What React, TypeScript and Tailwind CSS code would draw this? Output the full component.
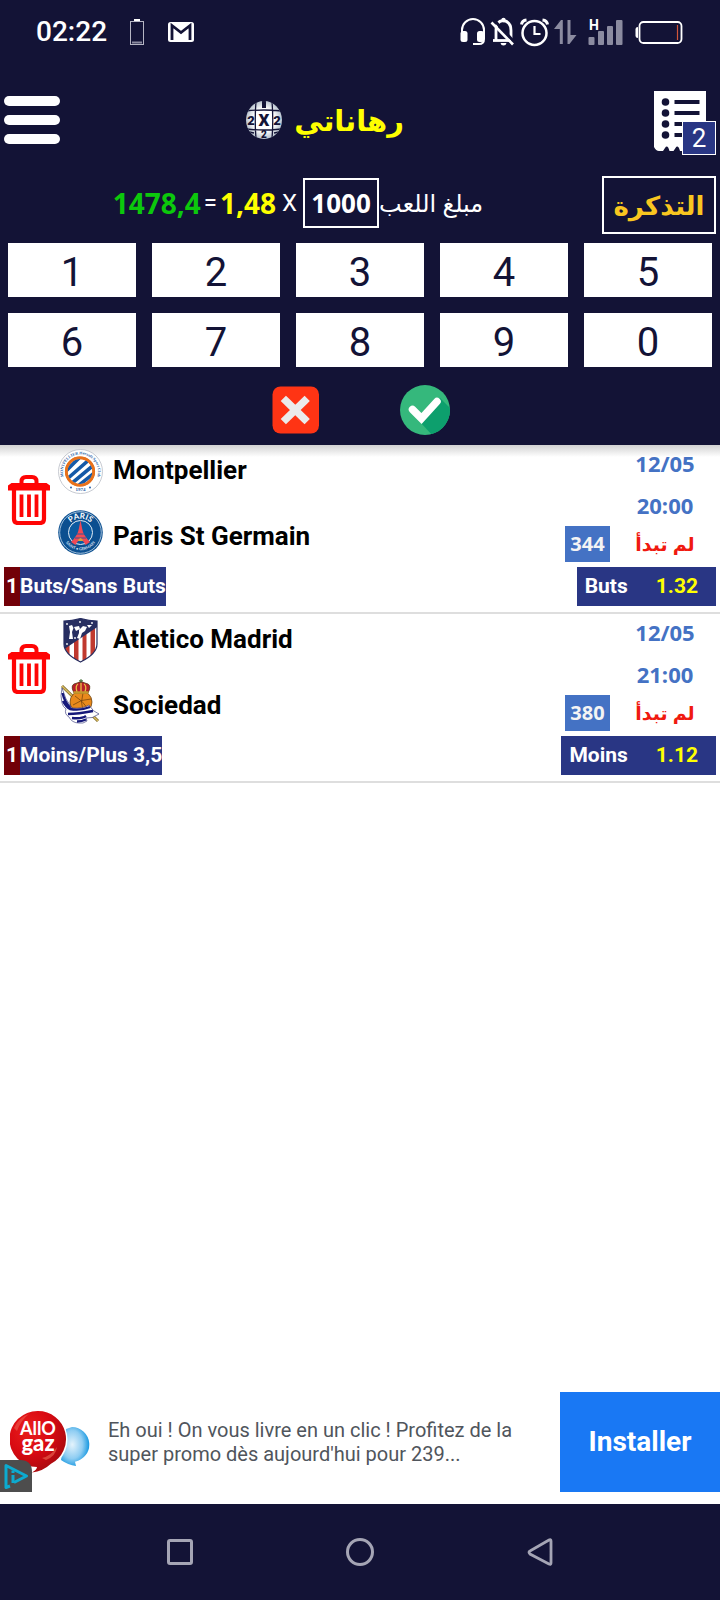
import { useState } from 'react';
import { clsx } from 'clsx';

type Match = {
  id: number;
  home: string;
  away: string;
  homeLogo: () => React.ReactElement;
  awayLogo: () => React.ReactElement;
  date: string;
  time: string;
  code: string;
  market: string;
  pick: string;
  odd: string;
};

function StatusIcons() {
  return (
    <svg viewBox="0 0 226 32" className="w-[226px] h-8" fill="none">
      {/* headset */}
      <path d="M3 21v-7a11 11 0 0 1 22 0v9q0 5-5 5h-6" stroke="#fff" strokeWidth="2" />
      <rect x="1.500" y="15" width="7" height="11" rx="2.500" fill="#fff" />
      <rect x="18" y="15" width="7" height="11" rx="2.500" fill="#fff" />
      {/* muted bell */}
      <path d="M37 24V14q0-8.500 7-9.500 8 1 8 10v10" stroke="#fff" strokeWidth="2.800" />
      <path d="M34 24.500h18" stroke="#fff" strokeWidth="2.800" />
      <circle cx="44.500" cy="4" r="2.200" fill="#fff" />
      <path d="M41.500 27h6q-.5 2.500-3 2.500t-3-2.500" fill="#fff" />
      <path d="M35 4l22 24" stroke="#131336" strokeWidth="3" />
      <path d="M32.500 6.500l21.500 22" stroke="#fff" strokeWidth="2.600" />
      {/* alarm */}
      <circle cx="75.500" cy="17" r="12" stroke="#fff" strokeWidth="2.500" />
      <path d="M75.500 10v8h6" stroke="#fff" strokeWidth="2.200" />
      <path d="M62.500 8.500q.5-4 5-4.500M88.500 8.500q-.5-4-5-4.500" stroke="#fff" strokeWidth="3" />
      {/* mobile data arrows */}
      <path d="M95 13l7-9h1.800v24h-3V13zM108.500 4h3v15h6l-7 9h-2z" fill="#8b8ba0" />
      {/* signal */}
      <text x="130" y="14" fontSize="14" fontWeight="700" fill="#fff" fontFamily="Roboto, sans-serif">H</text>
      <rect x="129.500" y="21" width="6" height="8" rx="1" fill="#8b8ba0" />
      <rect x="139" y="15" width="6" height="14" rx="1" fill="#8b8ba0" />
      <rect x="148" y="10" width="6" height="19" rx="1" fill="#8b8ba0" />
      <rect x="157" y="4" width="6.500" height="25" rx="1" fill="#8b8ba0" />
      {/* battery */}
      <rect x="180.500" y="6" width="42" height="21" rx="4" stroke="#fff" strokeWidth="1.800" />
      <path d="M179 11q-2.500 0-2.500 2v7q0 2 2.500 2z" fill="#fff" />
      <path d="M218.500 9v15" stroke="#d2553a" strokeWidth="1.200" />
    </svg>
  );
}

function MenuIcon() {
  return (
    <svg viewBox="0 0 56 48" className="w-14 h-12" fill="#fff">
      <rect width="56" height="10" rx="5" />
      <rect y="19" width="56" height="10" rx="5" />
      <rect y="38" width="56" height="10" rx="5" />
    </svg>
  );
}

function BallLogo() {
  return (
    <svg viewBox="0 0 36 38" className="w-9 h-[38px]">
      <defs>
        <radialGradient id="ball">
          <stop offset="0.600" stopColor="#fff" />
          <stop offset="1" stopColor="#b9c3cf" />
        </radialGradient>
        <clipPath id="ballClip"><ellipse cx="18" cy="19" rx="18" ry="19" /></clipPath>
      </defs>
      <g clipPath="url(#ballClip)">
        <rect width="36" height="38" fill="url(#ball)" />
        <path d="M10 0q-1.500 19 0 38M26 0q1.500 19 0 38M0 10q18-2 36 0M0 28q18 2 36 0" stroke="#131336" strokeWidth="1.300" fill="none" />
        <path d="M16 0h4v7h-4z" fill="#131336" />
        <path d="M2 9q2-5 6-7M34 9q-2-5-6-7M3 31l5 1M33 31l-5 1" stroke="#131336" strokeWidth="1.500" />
        <g fill="#131336" fontFamily="Roboto, sans-serif" fontWeight="900" textAnchor="middle">
          <text x="18" y="25" fontSize="17">X</text>
          <text x="5" y="24" fontSize="13">2</text>
          <text x="31" y="24" fontSize="13">2</text>
          <text x="18" y="37" fontSize="10">2</text>
        </g>
      </g>
    </svg>
  );
}

function TicketIcon() {
  return (
    <svg viewBox="0 0 52 62" className="w-[52px] h-[62px]">
      <path d="M0 0h52v58l-4 2-4-4-4 4-5 0q-2-6-4 0h-5q-2-7-4.500-3l-2 3h-4q-2-7-4.500-3l-2 3H5q-3 0-5-4z" fill="#fff" />
      <g fill="#131336">
        {[11, 22, 33, 44].map(y => (
          <g key={y}>
            <circle cx="11.500" cy={y} r="3.800" />
            <rect x="20.500" y={y - 2} width="25" height="4" />
          </g>
        ))}
      </g>
    </svg>
  );
}

function TrashIcon() {
  return (
    <svg viewBox="0 0 42 50" className="w-[42px] h-[50px]" fill="none" stroke="#ff0505">
      <path d="M13.500 9V6.500q0-4.500 4.500-4.500h6q4.500 0 4.500 4.500V9" strokeWidth="4" />
      <path d="M0 13.500v-3L3.500 8h35l3.500 2.500v5H0z" fill="#ff0505" stroke="none" />
      <path d="M6 15v29q0 4 4 4h22q4 0 4-4V15" strokeWidth="4.200" />
      <path d="M13.500 19.500V42M21 19.500V42M28.500 19.500V42" strokeWidth="3.800" />
    </svg>
  );
}

function MontpellierLogo() {
  return (
    <svg viewBox="0 0 45 45" className="size-[45px]">
      <defs>
        <clipPath id="mtp"><circle cx="22" cy="22.500" r="12.500" /></clipPath>
        <path id="mtpArc" d="M9 34A17.500 17.500 0 1 1 36 34" />
      </defs>
      <circle cx="22.500" cy="22.500" r="22" fill="#fff" stroke="#b9bdc5" strokeWidth="0.800" />
      <circle cx="22" cy="22.500" r="13.700" fill="#fff" stroke="#e8711c" strokeWidth="2.800" />
      <g clipPath="url(#mtp)" stroke="#1559a7" strokeWidth="3.600">
        <path d="M5 25L25 5M8 31L32 10M13 35L37 15M20 37L40 21" />
      </g>
      <circle cx="22" cy="22.500" r="13.700" fill="none" stroke="#e8711c" strokeWidth="2.600" />
      <text fill="#2a62a8" fontSize="4" fontWeight="700" fontFamily="Liberation Serif, serif" textAnchor="middle">
        <textPath href="#mtpArc" startOffset="50%">MONTPELLIER Hérault Sport Club</textPath>
      </text>
      <text x="22.500" y="42" fontSize="5" fontWeight="700" textAnchor="middle" fill="#2a62a8" fontFamily="Liberation Serif, serif">1974</text>
      <circle cx="13" cy="38.500" r="1" fill="#2a62a8" />
      <circle cx="32" cy="38.500" r="1" fill="#2a62a8" />
    </svg>
  );
}

function ParisLogo() {
  return (
    <svg viewBox="0 0 45 45" className="size-[45px]">
      <defs>
        <path id="psgTop" d="M9 19A14 14 0 0 1 36 19" />
        <path id="psgBottom" d="M6.500 30.500A18 18 0 0 0 38.500 30.500" />
      </defs>
      <circle cx="22.500" cy="22.500" r="22.300" fill="#0b4f90" />
      <circle cx="22.500" cy="22.500" r="20.800" fill="none" stroke="#c9dcec" strokeWidth="0.800" />
      <circle cx="22.500" cy="22.500" r="12" fill="#0a5aa0" stroke="#e4edf5" strokeWidth="1" />
      <path d="M22.500 10l1.500 8q1 7 8 14l-4.500 3q-2-4.500-5-5-3 .5-5 5l-4.500-3q7-7 8-14z" fill="#f04a56" />
      <path d="M18 24h9M17 28h11" stroke="#0a5aa0" strokeWidth="0.800" />
      <path d="M20 31q0-2 2.500-3 2.500 1 2.500 3z" fill="#d9a33b" />
      <text fill="#fff" fontSize="8" fontWeight="700" fontFamily="Lato, sans-serif" textAnchor="middle">
        <textPath href="#psgTop" startOffset="50%">PARIS</textPath>
      </text>
      <text fill="#cfdfee" fontSize="4" fontWeight="700" fontFamily="Lato, sans-serif" textAnchor="middle">
        <textPath href="#psgBottom" startOffset="50%">SAINT • GERMAIN</textPath>
      </text>
    </svg>
  );
}

function AtleticoLogo() {
  return (
    <svg viewBox="0 0 45 45" className="size-[45px]">
      <defs>
        <clipPath id="atm"><path d="M6 3q8 0 16.500-2.500Q31 3 39 3v23q0 10-16.500 18Q6 36 6 26z" /></clipPath>
      </defs>
      <g clipPath="url(#atm)">
        <rect x="5" width="36" height="45" fill="#fff" />
        <path d="M7 20h4.500v25H7zM16 16h4.500v29H16zM24.500 10h4v35h-4zM32.500 5h4.500v40h-4.500z" fill="#c0392f" />
        <path d="M5 0h36v8L5 32z" fill="#272e61" />
      </g>
      <path d="M6 3q8 0 16.500-2.500Q31 3 39 3v23q0 10-16.500 18Q6 36 6 26z" fill="none" stroke="#272e61" strokeWidth="1.200" />
      {/* bear and tree */}
      <path d="M11 8l3-1 1.500 3-1.500 4 1 7h-4l1-7zM16 9l5-1 1 3-4 2zM21 12l4-4 4 1-2 4-3 2-2 6-3-1 2-5zM29 7l5 0-3 3z" fill="#fff" />
      <g fill="#fff">
        <circle cx="9" cy="6" r="0.900" />
        <circle cx="22" cy="4" r="0.900" />
        <circle cx="34" cy="5" r="0.900" />
        <circle cx="9" cy="26" r="0.900" />
        <circle cx="17" cy="20" r="0.900" />
      </g>
    </svg>
  );
}

function SociedadLogo() {
  return (
    <svg viewBox="0 0 45 45" className="size-[45px]">
      <path d="M4 7l36 35" stroke="#7a6526" strokeWidth="3" />
      <path d="M4 7l36 35" stroke="#d9bd62" strokeWidth="1.500" />
      <circle cx="23" cy="23" r="11" fill="#e98a1c" stroke="#5b3a10" strokeWidth="0.700" />
      <path d="M17 17q7 4 14 14M15 26q8-6 18-6M25 14q-3 9 0 18" stroke="#6b3e0c" strokeWidth="0.700" fill="none" />
      {/* crown */}
      <path d="M16 14q-5-9 3-10 4-3 8 0 8 1 3 10z" fill="#b7202a" stroke="#4b3a12" strokeWidth="0.700" />
      <path d="M19 13q-2-6 1-8M23 13V4M27 13q2-6-1-8" stroke="#e8c045" strokeWidth="1.300" fill="none" />
      <path d="M15.500 13.500h15" stroke="#c4982c" strokeWidth="2.500" />
      <path d="M23 0v4M21 1.800h4" stroke="#3f6f35" strokeWidth="1" />
      {/* flag */}
      <path d="M4 9q-2 8 0 15 1 4 4 6-2 5 3 8 3 6 10 6 4 1 8-2l-1-3q6 1 13-4-6-2-10-9-6 4-17 3-7-8-10-20z" fill="#fff" stroke="#26296f" strokeWidth="0.600" />
      <path d="M4.500 14q2 9 8 15M5 22q3 6 7 8 10 2 20-2M10 35q10 0 25-3M14 39q10 1 14-2M19 42.500q5 0 9-2" stroke="#16197a" strokeWidth="2.400" fill="none" />
    </svg>
  );
}

function AdLogo() {
  return (
    <svg viewBox="0 0 80 64" className="w-20 h-16">
      <defs>
        <radialGradient id="red" cx="0.350" cy="0.300" r="0.800">
          <stop offset="0" stopColor="#ea1e1c" />
          <stop offset="0.500" stopColor="#d80a12" />
          <stop offset="1" stopColor="#9d0a0e" />
        </radialGradient>
        <radialGradient id="blue" cx="0.400" cy="0.450" r="0.600">
          <stop offset="0" stopColor="#e4f3fc" />
          <stop offset="0.600" stopColor="#8fcdf2" />
          <stop offset="1" stopColor="#1597e0" />
        </radialGradient>
      </defs>
      <path d="M62 17a17.500 17.500 0 0 1 3 34.700l1 4.300q-8-1-15-6l5-31z" fill="url(#blue)" />
      <circle cx="28" cy="29.500" r="29.500" fill="#fff" />
      <path d="M28 1a28 28 0 0 1 13 52.800q-8 7.500-19 8.700 5-3 5-5.500A28 28 0 0 1 28 1z" fill="url(#red)" />
      <path d="M4 18q5-11 15-14-8 6-12 17z" fill="#ee5a4e" opacity="0.600" />
      <path d="M32 48q9-2 15-11-1 9-11 13z" fill="#ee6a55" opacity="0.600" />
      <text fill="#fff" textAnchor="middle" fontFamily="Lato, sans-serif">
        <tspan x="28" y="25" fontSize="18" fontWeight="700">AllO</tspan>
        <tspan x="28" y="41" fontSize="22" fontWeight="900">gaz</tspan>
      </text>
    </svg>
  );
}

const MATCHES: Match[] = [
  {
    id: 1,
    home: 'Montpellier',
    away: 'Paris St Germain',
    homeLogo: MontpellierLogo,
    awayLogo: ParisLogo,
    date: '12/05',
    time: '20:00',
    code: '344',
    market: 'Buts/Sans Buts',
    pick: 'Buts',
    odd: '1.32',
  },
  {
    id: 2,
    home: 'Atletico Madrid',
    away: 'Sociedad',
    homeLogo: AtleticoLogo,
    awayLogo: SociedadLogo,
    date: '12/05',
    time: '21:00',
    code: '380',
    market: 'Moins/Plus 3,5',
    pick: 'Moins',
    odd: '1.12',
  },
];

const KEYS = ['1', '2', '3', '4', '5', '6', '7', '8', '9', '0'];

function MatchRow({ match, onRemove }: { match: Match; onRemove: () => void }) {
  const HomeLogo = match.homeLogo;
  const AwayLogo = match.awayLogo;

  return (
    <li className="border-b-2 border-[#dedede] pb-[6px]">
      <div className="flex items-start">
        <button aria-label="Supprimer" onClick={onRemove} className="ml-2 mt-[30px] shrink-0">
          <TrashIcon />
        </button>
        <div className="ml-2 mt-1 flex flex-col gap-4 shrink-0">
          <HomeLogo />
          <AwayLogo />
        </div>
        <div className="ml-[10px] mt-1 flex-1 flex flex-col gap-6 text-[26px] leading-[42px] font-bold text-black font-['Roboto',sans-serif]">
          <h2>{match.home}</h2>
          <h2>{match.away}</h2>
        </div>
        <div className="flex flex-col items-end text-[22px] font-bold text-[#4472c4]">
          <span className="w-[110px] text-center leading-9">{match.date}</span>
          <span className="mt-1 w-[110px] text-center leading-[41px]">{match.time}</span>
          <div className="flex items-center h-9">
            <span className="bg-[#4472c4] text-[#f4f4f4] text-xl leading-9 w-[45px] text-center">{match.code}</span>
            <span dir="rtl" className="w-[110px] text-center text-[19px] text-[#f01a10]">لم تبدأ</span>
          </div>
        </div>
      </div>
      <div className="mt-[5px] px-1 flex justify-between text-[21px] leading-[39px] font-bold text-white font-['Roboto',sans-serif]">
        <div className="flex">
          <span className="w-4 text-center bg-[#720008]">1</span>
          <span className="bg-[#293684]">{match.market}</span>
        </div>
        <div className="flex gap-7 bg-[#293684] pl-2 pr-[18px]">
          <span>{match.pick}</span>
          <span className="text-[#ffff00]">{match.odd}</span>
        </div>
      </div>
    </li>
  );
}

export default function App() {
  const [stake, setStake] = useState('1000');
  const [matches, setMatches] = useState(MATCHES);

  return (
    <div className="min-h-screen flex flex-col bg-white font-['Open_Sans','DejaVu_Sans',sans-serif]">
      <div className="bg-[#131336]">
        <div className="h-16 flex items-center pl-9 pr-[35px] text-white font-['Roboto',sans-serif]">
          <span className="text-[28px] font-medium">02:22</span>
          <svg viewBox="0 0 14 26" className="w-[14px] h-[26px] ml-[23px]" fill="none">
            <rect x="0.500" y="2.500" width="13" height="23" stroke="#b5b5c3" />
            <path d="M4 1h6" stroke="#fff" strokeWidth="2" />
            <path d="M2 23.500h10" stroke="#8b8ba0" strokeWidth="2" />
          </svg>
          <svg viewBox="0 0 26 20" className="w-[26px] h-5 ml-6">
            <rect width="26" height="20" rx="2.500" fill="#fff" />
            <path d="M4 18V3.500l9 7 9-7V18" fill="none" stroke="#131336" strokeWidth="2.800" />
          </svg>
          <div className="ml-auto">
            <StatusIcons />
          </div>
        </div>

        <header className="h-28 flex items-center justify-between px-1">
          <button aria-label="Menu"><MenuIcon /></button>
          <div className="flex items-center gap-3 mr-16">
            <BallLogo />
            <h1 dir="rtl" className="text-[29px] leading-10 font-bold text-[#ffff00]">رهاناتي</h1>
          </div>
          <button aria-label="Ticket" className="relative mt-1 pr-[10px]">
            <TicketIcon />
            <span className="absolute -bottom-[2px] right-0 size-[34px] border border-white bg-[#293684] text-white text-[26px] leading-8 text-center font-['Roboto',sans-serif]">2</span>
          </button>
        </header>

        <div className="flex items-center px-1">
          <div className="flex-1 flex items-center justify-center font-bold text-[28px] pr-[10px] pb-1">
            <span className="text-[#0cc80c]">1478,4</span>
            <span className="mx-[3px] text-2xl font-normal text-white font-['Roboto',sans-serif]">=</span>
            <span className="text-[#ffff00]">1,48</span>
            <span className="mx-[6px] text-2xl font-normal text-white font-['Roboto',sans-serif]">X</span>
            <input
              id="stake"
              value={stake}
              onChange={e => setStake(e.target.value)}
              className="w-[76px] h-[50px] border-2 border-white bg-transparent text-white text-center text-[26px]"
            />
            <label htmlFor="stake" dir="rtl" className="text-2xl font-normal text-white">مبلغ اللعب</label>
          </div>
          <button dir="rtl" className="w-[114px] h-[58px] border-2 border-white text-[26px] font-bold text-[#f9c620]">التذكرة</button>
        </div>

        <div className="mt-[9px] px-2 grid grid-cols-5 gap-4">
          {KEYS.map(key => (
            <button
              key={key}
              onClick={() => setStake(stake + key)}
              className="h-[54px] pt-[5px] bg-white text-[#131336] text-[40px] leading-none font-['Roboto',sans-serif]"
            >
              {key}
            </button>
          ))}
        </div>

        <div className="mt-[18px] pb-[10px] pl-[2px] flex items-center justify-center gap-20">
          <button aria-label="Effacer" onClick={() => setStake('')}>
            <svg viewBox="0 0 48 48" className="size-12">
              <rect x="0.500" y="0.500" width="46.500" height="47" rx="8" fill="#ff3414" />
              <path d="M14 15l18.500 18M32.500 15L14 33" stroke="#ebebeb" strokeWidth="7.500" strokeLinecap="square" />
            </svg>
          </button>
          <button aria-label="Valider">
            <svg viewBox="0 0 50 50" className="size-[50px]">
              <defs><clipPath id="okClip"><circle cx="25" cy="25" r="25" /></clipPath></defs>
              <g clipPath="url(#okClip)">
                <rect width="50" height="50" fill="#35b87c" />
                <path d="M40 13l12 12v27H34L20 37z" fill="#0d9f6d" />
              </g>
              <path d="M12.500 24.500l9 9L37 16.500" fill="none" stroke="#fff" strokeWidth="7.500" strokeLinecap="round" />
            </svg>
          </button>
        </div>
      </div>

      <ul className={clsx('flex-1', matches.length > 0 && 'bg-[linear-gradient(#d2d2d2,#ffffff_12px)]')}>
        {matches.map(match => (
          <MatchRow
            key={match.id}
            match={match}
            onRemove={() => setMatches(matches.filter(m => m.id !== match.id))}
          />
        ))}
      </ul>

      <section className="mb-3 h-[100px] flex items-center font-['Roboto',sans-serif]">
        <div className="relative h-full w-[108px] shrink-0 pl-[10px] flex items-center">
          <AdLogo />
          <a href="#adchoices" aria-label="AdChoices" className="absolute left-0 bottom-0">
            <svg viewBox="0 0 32 32" className="size-8">
              <path d="M0 0h20q12 0 12 12v20H0z" fill="#4d4d4d" />
              <path d="M10 26l-4 1.500V5.500L26.500 16 14 22.500" fill="none" stroke="#0cabd0" strokeWidth="3" strokeLinejoin="round" />
              <path d="M13 15v8M13 10.500v2.500" stroke="#0cabd0" strokeWidth="3" />
            </svg>
          </a>
        </div>
        <p className="flex-1 pr-8 text-xl leading-6 text-[#50555c]">
          Eh oui ! On vous livre en un clic ! Profitez de la super promo dès aujourd'hui pour 239...
        </p>
        <button className="w-40 h-full bg-[#1978f4] text-white text-[28px] font-bold">Installer</button>
      </section>

      <nav className="h-24 bg-[#131336] flex items-center justify-center gap-[153px] text-[#a5a5b5]">
        <button aria-label="Recent" className="size-[26px] rounded-[3px] border-3 border-current" />
        <button aria-label="Home" className="size-7 rounded-full border-3 border-current" />
        <button aria-label="Back">
          <svg viewBox="0 0 26 28" className="w-[26px] h-7">
            <path d="M24 3v22q0 2-2 1L3 16q-2-2 0-3L22 2q2-1 2 1z" fill="none" stroke="currentColor" strokeWidth="2.800" />
          </svg>
        </button>
      </nav>
    </div>
  );
}
